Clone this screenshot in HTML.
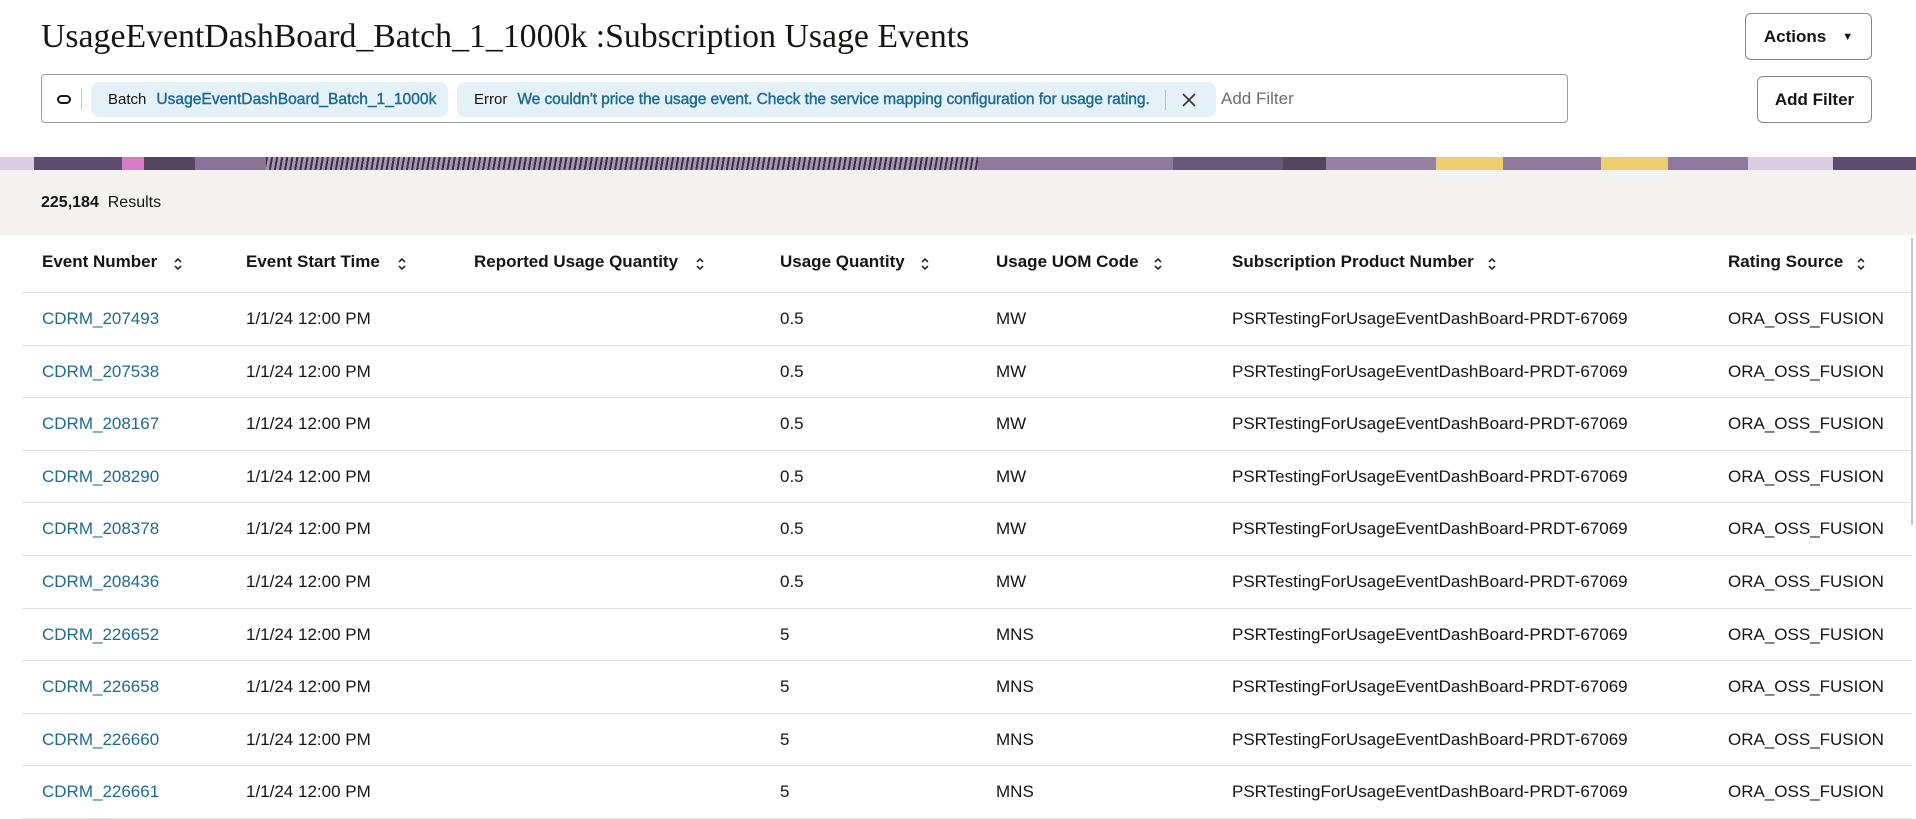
<!DOCTYPE html>
<html><head><meta charset="utf-8"><style>
*{margin:0;padding:0;box-sizing:border-box}
body{width:1916px;height:795px;overflow:hidden;background:#fff;font-family:"Liberation Sans",sans-serif;color:#161513;position:relative}
.abs{position:absolute}
.title{left:41px;top:18px;font-family:"Liberation Serif",serif;font-size:33.8px;color:#161513;white-space:nowrap}
.btn{border:1px solid #8a8886;border-radius:6px;background:#fff;font-size:17px;font-weight:bold;color:#161513;display:flex;align-items:center;justify-content:center}
.fbox{left:41px;top:74px;width:1527px;height:49px;border:1px solid #9e9b98;border-radius:4px}
.chip{top:7px;height:35px;background:#e4f1f7;border-radius:8px;font-size:15px;display:flex;align-items:center;white-space:nowrap}
.chip .v{color:#1e6a8f;margin-left:10px;-webkit-text-stroke:0.4px #1e6a8f}
.banner{left:0;top:157px;width:1916px;height:13px;display:flex}
.banner div{height:13px}
.res{left:0;top:170px;width:1916px;height:65px;background:#f3f2f0}
.h,.c{position:absolute;font-size:17px;white-space:nowrap}
.h{font-weight:bold;top:252px}
.link{color:#1e6a8f}
.line{position:absolute;left:22px;width:1890px;height:1px;background:#e0dedc}
.s{position:absolute;width:10px;height:16px;top:256px}
</style></head><body>
<div class="abs title">UsageEventDashBoard_Batch_1_1000k :Subscription Usage Events</div>
<div class="abs btn" style="left:1745px;top:13px;width:127px;height:47px">Actions<span style="font-size:11px;margin-left:16px">▼</span></div>
<div class="abs btn" style="left:1757px;top:76px;width:115px;height:47px">Add Filter</div>
<div class="abs fbox">
 <div class="abs" style="left:15px;top:20px;width:14px;height:9px;border:2px solid #161513;border-radius:5px"></div>
 <div class="abs" style="left:39px;top:13px;width:1px;height:22px;background:#ccc"></div>
 <div class="abs chip" style="left:49px;width:357px;padding-left:17px">Batch<span class="v" style="font-size:15.6px">UsageEventDashBoard_Batch_1_1000k</span></div>
 <div class="abs chip" style="left:415px;width:759px;padding-left:17px">Error<span class="v" style="font-size:15.6px;letter-spacing:-0.1px">We couldn't price the usage event. Check the service mapping configuration for usage rating.</span>
  <span style="position:absolute;right:50px;top:8px;width:1px;height:20px;background:#bbb"></span>
  <svg style="position:absolute;right:19px;top:10px" width="16" height="16" viewBox="0 0 16 16"><path d="M2 2L14 14M14 2L2 14" stroke="#333" stroke-width="1.6"/></svg>
 </div>
 <div class="abs" style="left:1179px;top:14px;font-size:17px;color:#6f6c69">Add Filter</div>
</div>
<div class="abs banner">
 <div style="width:34px;background:#dccbe3"></div>
 <div style="width:88px;background:#5e4a6e"></div>
 <div style="width:22px;background:#d97cc8"></div>
 <div style="width:51px;background:#574463"></div>
 <div style="width:71px;background:#8b7298"></div>
 <div style="width:712px;background:repeating-linear-gradient(100deg,#3d2f48 0 2px,#a994b5 2px 5px)"></div>
 <div style="width:195px;background:#8f789e"></div>
 <div style="width:110px;background:#6a5679"></div>
 <div style="width:43px;background:#574463"></div>
 <div style="width:110px;background:#9782a6"></div>
 <div style="width:67px;background:#f0cd70"></div>
 <div style="width:98px;background:#8f789e"></div>
 <div style="width:67px;background:#f0cd70"></div>
 <div style="width:80px;background:#8f789e"></div>
 <div style="width:85px;background:#dccbe3"></div>
 <div style="width:83px;background:#5e4a6e"></div>
</div>
<div class="abs res"><div class="abs" style="left:41px;top:24px;font-size:16px"><b>225,184</b>&nbsp; Results</div></div>
<div class="abs" style="left:1911px;top:238px;width:2px;height:287px;background:#c8c6c4"></div>
<div class="h" style="left:42px">Event Number</div>
<div class="h" style="left:246px">Event Start Time</div>
<div class="h" style="left:474px">Reported Usage Quantity</div>
<div class="h" style="left:780px">Usage Quantity</div>
<div class="h" style="left:996px">Usage UOM Code</div>
<div class="h" style="left:1232px">Subscription Product Number</div>
<div class="h" style="left:1728px">Rating Source</div>
<svg class="s" style="left:173px" viewBox="0 0 10 16"><path d="M2 6L5 3L8 6M2 10L5 13L8 10" fill="none" stroke="#161513" stroke-width="1.5"/></svg>
<svg class="s" style="left:397px" viewBox="0 0 10 16"><path d="M2 6L5 3L8 6M2 10L5 13L8 10" fill="none" stroke="#161513" stroke-width="1.5"/></svg>
<svg class="s" style="left:695px" viewBox="0 0 10 16"><path d="M2 6L5 3L8 6M2 10L5 13L8 10" fill="none" stroke="#161513" stroke-width="1.5"/></svg>
<svg class="s" style="left:920px" viewBox="0 0 10 16"><path d="M2 6L5 3L8 6M2 10L5 13L8 10" fill="none" stroke="#161513" stroke-width="1.5"/></svg>
<svg class="s" style="left:1153px" viewBox="0 0 10 16"><path d="M2 6L5 3L8 6M2 10L5 13L8 10" fill="none" stroke="#161513" stroke-width="1.5"/></svg>
<svg class="s" style="left:1487px" viewBox="0 0 10 16"><path d="M2 6L5 3L8 6M2 10L5 13L8 10" fill="none" stroke="#161513" stroke-width="1.5"/></svg>
<svg class="s" style="left:1856px" viewBox="0 0 10 16"><path d="M2 6L5 3L8 6M2 10L5 13L8 10" fill="none" stroke="#161513" stroke-width="1.5"/></svg>
<div class="line" style="top:292px"></div>
<div id="rows"></div>
<script>
var d=[["207493","0.5","MW"],["207538","0.5","MW"],["208167","0.5","MW"],["208290","0.5","MW"],["208378","0.5","MW"],["208436","0.5","MW"],["226652","5","MNS"],["226658","5","MNS"],["226660","5","MNS"],["226661","5","MNS"]];
var h="";
for(var i=0;i<d.length;i++){var t=309+i*52.6;var l=292+(i+1)*52.6;
h+='<div class="c link" style="left:42px;top:'+t+'px">CDRM_'+d[i][0]+'</div>'+
'<div class="c" style="left:246px;top:'+t+'px">1/1/24 12:00 PM</div>'+
'<div class="c" style="left:780px;top:'+t+'px">'+d[i][1]+'</div>'+
'<div class="c" style="left:996px;top:'+t+'px">'+d[i][2]+'</div>'+
'<div class="c" style="left:1232px;top:'+t+'px">PSRTestingForUsageEventDashBoard-PRDT-67069</div>'+
'<div class="c" style="left:1728px;top:'+t+'px">ORA_OSS_FUSION</div>'+
'<div class="line" style="top:'+l+'px"></div>';}
document.getElementById("rows").innerHTML=h;
</script>
</body></html>
